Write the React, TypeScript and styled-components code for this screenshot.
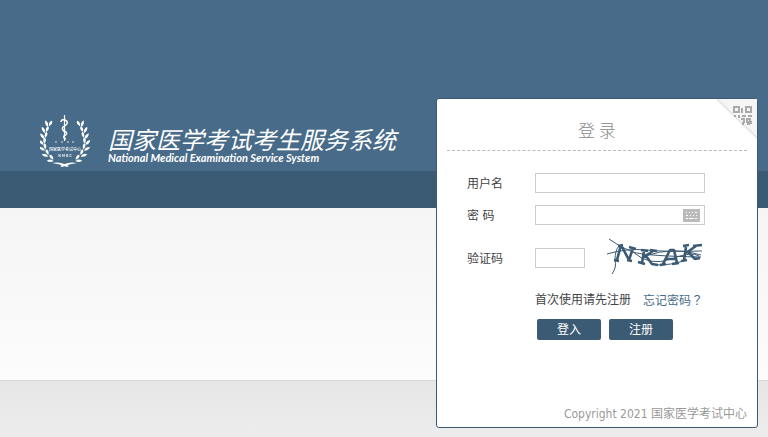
import React from "react";
import styled, { createGlobalStyle } from "styled-components";

const GlobalStyle = createGlobalStyle`
  * { box-sizing: border-box; }
  body {
    margin: 0;
    font-family: "DejaVu Sans Condensed", "Noto Sans CJK SC", sans-serif;
    font-size: 12px;
    line-height: 18px;
    color: #444;
  }
`;

const Page = styled.div`
  min-height: 100vh;
  display: flex;
  align-items: flex-start;
  justify-content: space-between;
  padding: 98px 10px 9px 40px;
  background:
    linear-gradient(#476b89, #476b89) 0 0 / 100% 171px no-repeat,
    linear-gradient(#3b5a74, #3b5a74) 0 171px / 100% 37px no-repeat,
    linear-gradient(#f5f5f5, #fcfcfc) 0 208px / 100% 172px no-repeat,
    linear-gradient(#d8d8d8, #d8d8d8) 0 380px / 100% 1px no-repeat,
    linear-gradient(#e6e6e6, #ededed) 0 381px / 100% 60px no-repeat,
    #ededed;
`;

const Brand = styled.header`
  display: flex;
  align-items: flex-start;
  gap: 18px;
  padding-top: 16px;
  color: #fff;
  white-space: nowrap;
`;

const BrandName = styled.h1`
  margin: 0;
  padding-top: 12px;
  font: italic 400 24px/26px "Noto Sans CJK SC", sans-serif;
`;

const BrandSub = styled.p`
  margin: 0;
  font: italic 700 11px/12px Lato, sans-serif;
`;

const Card = styled.main`
  position: relative;
  width: 322px;
  min-height: 330px;
  flex: none;
  display: flex;
  flex-direction: column;
  padding: 0 10px 4px;
  border: 1px solid #3b5a74;
  border-radius: 3px;
  background: #fff;
`;

const QrCorner = styled.button`
  position: absolute;
  top: 0;
  right: 0;
  padding: 0;
  border: 0;
  background: none;
  line-height: 0;
  cursor: pointer;
`;

const CardTitle = styled.h2`
  margin: 0;
  padding: 18px 0 8px;
  border-bottom: 1px dashed #bbb;
  text-align: center;
  font: 300 17px/25px "Noto Sans CJK SC", sans-serif;
  color: #888;
`;

const Form = styled.form`
  display: grid;
  grid-template-columns: 68px 170px;
  align-items: center;
  row-gap: 12px;
  padding: 22px 0 0 20px;
`;

const Label = styled.label`
  padding-top: 2px;
`;

const TextField = styled.input<{ $short?: boolean }>`
  display: block;
  width: ${(p) => (p.$short ? "50px" : "100%")};
  height: 20px;
  padding: 0 4px;
  border: 1px solid #ccc;
  border-radius: 0;
  background: #fff;
  font: inherit;
`;

const PasswordBox = styled.div`
  position: relative;
`;

const KeyboardButton = styled.button`
  position: absolute;
  top: 4px;
  right: 5px;
  padding: 0;
  border: 0;
  background: none;
  line-height: 0;
  cursor: pointer;
`;

const CodeRow = styled.div`
  display: flex;
  align-items: center;
  justify-content: space-between;
  height: 42px;
`;

const Actions = styled.div`
  grid-column: 2;
`;

const Hints = styled.div`
  display: flex;
  gap: 12px;
  white-space: nowrap;
`;

const ForgotLink = styled.a`
  color: #476b89;
  font-family: "Noto Sans CJK TC", sans-serif;
  text-decoration: none;
`;

const Buttons = styled.div`
  display: flex;
  gap: 8px;
  padding: 10px 0 0 2px;
`;

const Button = styled.button`
  width: 64px;
  height: 21px;
  padding: 0;
  border: 0;
  border-radius: 2px;
  background: #3b5a74;
  color: #fff;
  font: inherit;
  cursor: pointer;
`;

const Copyright = styled.footer`
  margin-top: auto;
  text-align: right;
  color: #999;
`;

const LEAVES = [
  [8, 11, 12],
  [5, 17, 4],
  [4, 23, -4],
  [3, 29, -14],
  [4, 35, -26],
  [7, 41, -40],
  [12, 46, -56],
];

function Branch() {
  return (
    <g fill="#fff">
      {LEAVES.map(([x, y, angle]) => (
        <g key={y} transform={`translate(${x} ${y}) rotate(${angle})`}>
          <path d="M0 2Q-4 0-3.500-4Q1-2 0 2Z" />
          <path d="M1 1Q0-4 3-5Q5-2 1 1Z" />
        </g>
      ))}
      <path d="M12 49Q20 47 29 52L27 53Q20 50 12 49Z" />
    </g>
  );
}

function Emblem() {
  return (
    <svg width="50" height="54" viewBox="0 0 50 54" aria-hidden="true">
      <Branch />
      <g transform="translate(49 0) scale(-1 1)">
        <Branch />
      </g>
      <path d="M24.500 1V27" stroke="#fff" strokeWidth="1.2" />
      <path
        d="M21 8Q21 5 25 6Q29 8 26 11L23 13Q21 16 26 18Q28 20 24 22Q23 24 26 25"
        fill="none"
        stroke="#fff"
        strokeWidth="1.5"
      />
      <g fill="#fff" fontFamily="Noto Sans CJK SC, sans-serif" fontSize="4" fontWeight="500" textAnchor="middle">
        <text x="25" y="37">国家医学考试中心</text>
        <text x="25" y="43">N M E C</text>
      </g>
      <path d="M15 28h2M21 28h2M27 28h2M32 28h2" stroke="#fff" opacity="0.8" />
    </svg>
  );
}

function QrIcon() {
  return (
    <svg width="40" height="40" viewBox="0 0 40 40" aria-hidden="true">
      <path d="M0 0H40V40Z" fill="#f5f5f5" />
      <path d="M0 0L40 39" stroke="#e8e8e8" strokeWidth="2" />
      <g fill="none" stroke="#aaa" strokeWidth="2">
        <path d="M17 8h5v5h-5zM29 8h5v5h-5z" />
        <path d="M25 9v5M17 17h2M22 16v3M25 17h4M31 17h4M24 20h3v4M30 20h3v3h-3zM34 22v3M26 23v3M30 25h3" />
      </g>
    </svg>
  );
}

function KeyboardIcon() {
  return (
    <svg width="17" height="13" viewBox="0 0 17 13" aria-hidden="true">
      <path d="M0 0h17v13H0z" fill="#bbb" />
      <path d="M3 3.500h1M6 3.500h1M9 3.500h1M12 3.500h2M3 6.500h2M7 6.500h1M10 6.500h1M13 6.500h1M3 9.500h2M6 9.500h5M12 9.500h2" stroke="#fff" />
    </svg>
  );
}

function Captcha() {
  return (
    <svg width="98" height="40" viewBox="0 0 98 40" role="img" aria-label="验证码图片" fill="none" stroke="#3b5a74">
      <g strokeWidth="2.6" strokeLinejoin="bevel">
        <path d="M7 22l5 1M10 22L14 7L22 22L26 10M11 8l5-1M22 9l7 2M20 22l5 1" />
        <path d="M37 13L35 25M31 24l7 2M34 12l7 1M37 19L46 13M39 18L45 26L51 27M43 12l7 1" />
        <path d="M56 26L63 12L67 12L70 25M58 21H68M53 27l6-1M65 26l7-1" />
        <path d="M79 9L77 22M74 23l6-1M76 8l6-1M79 15L89 8M81 14L88 21L93 20M86 8l9-1" />
      </g>
      <g strokeWidth="1">
        <path d="M2 1Q14 10 26 14T94 19M0 16Q20 10 39 12T95 13M5 36Q10 29 8 22Q8 12 12 8M26 14Q43 29 64 21T92 18M38 18Q67 8 94 17M49 27Q65 27 76 23" />
      </g>
    </svg>
  );
}

export default function App() {
  return (
    <>
      <GlobalStyle />
      <Page>
        <Brand>
          <Emblem />
          <div>
            <BrandName>国家医学考试考生服务系统</BrandName>
            <BrandSub>National Medical Examination Service System</BrandSub>
          </div>
        </Brand>
        <Card>
          <QrCorner type="button" aria-label="二维码登录">
            <QrIcon />
          </QrCorner>
          <CardTitle>登 录</CardTitle>
          <Form onSubmit={(e) => e.preventDefault()}>
            <Label htmlFor="user">用户名</Label>
            <TextField id="user" type="text" />
            <Label htmlFor="password">密 码</Label>
            <PasswordBox>
              <TextField id="password" type="password" />
              <KeyboardButton type="button" aria-label="软键盘">
                <KeyboardIcon />
              </KeyboardButton>
            </PasswordBox>
            <Label htmlFor="code">验证码</Label>
            <CodeRow>
              <TextField id="code" type="text" $short />
              <Captcha />
            </CodeRow>
            <Actions>
              <Hints>
                <span>首次使用请先注册</span>
                <ForgotLink href="#forgot">忘记密码？</ForgotLink>
              </Hints>
              <Buttons>
                <Button type="submit">登入</Button>
                <Button type="button">注册</Button>
              </Buttons>
            </Actions>
          </Form>
          <Copyright>Copyright 2021 国家医学考试中心</Copyright>
        </Card>
      </Page>
    </>
  );
}
